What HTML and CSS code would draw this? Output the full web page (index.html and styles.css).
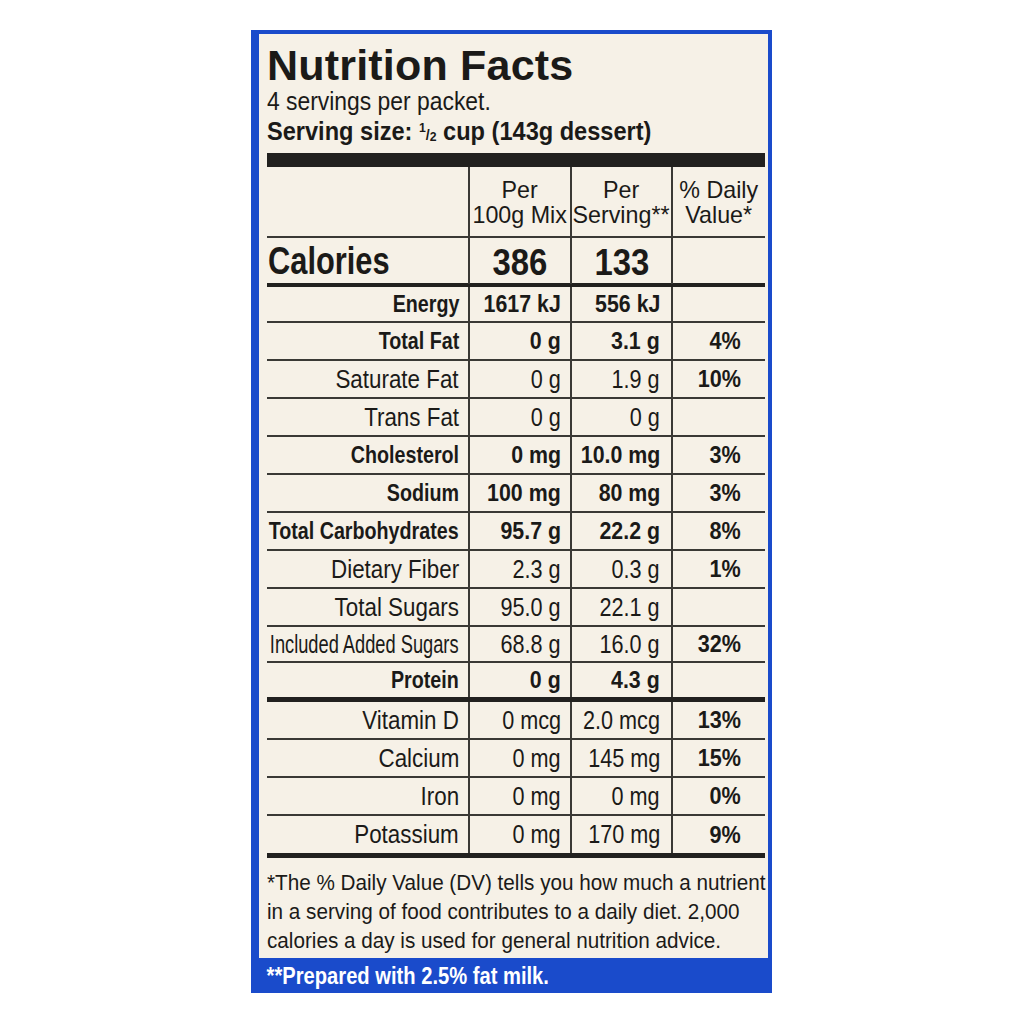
FILE: index.html
```html
<!DOCTYPE html>
<html lang="en">
<head>
<meta charset="utf-8">
<title>Nutrition Facts</title>
<link rel="stylesheet" href="styles.css">
</head>
<body>
<div class="label">
  <div class="card">
    <h1 class="title">Nutrition Facts</h1>
    <p class="servings">4 servings per packet.</p>
    <p class="size">Serving size: <span class="frac"><sup>1</sup>/<sub>2</sub></span> cup (143g dessert)</p>
    <div class="bar"></div>
    <div class="facts">
      <div class="row head">
        <div class="cell name"></div>
        <div class="cell hd"><span class="t">Per<br>100g Mix</span></div>
        <div class="cell hd"><span class="t">Per<br>Serving**</span></div>
        <div class="cell hd"><span class="t">% Daily<br>Value*</span></div>
      </div>
      <div class="row cal thick">
        <div class="cell name calname"><span class="t">Calories</span></div>
        <div class="cell calval"><span class="t">386</span></div>
        <div class="cell calval"><span class="t">133</span></div>
        <div class="cell"></div>
      </div>
      <div class="row short b">
        <div class="cell name"><span class="t">Energy</span></div>
        <div class="cell v2"><span class="t">1617 kJ</span></div>
        <div class="cell v3"><span class="t">556 kJ</span></div>
        <div class="cell dv"></div>
      </div>
      <div class="row b">
        <div class="cell name"><span class="t">Total Fat</span></div>
        <div class="cell v2"><span class="t">0 g</span></div>
        <div class="cell v3"><span class="t">3.1 g</span></div>
        <div class="cell dv"><span class="t">4%</span></div>
      </div>
      <div class="row r">
        <div class="cell name"><span class="t">Saturate Fat</span></div>
        <div class="cell v2"><span class="t">0 g</span></div>
        <div class="cell v3"><span class="t">1.9 g</span></div>
        <div class="cell dv"><span class="t">10%</span></div>
      </div>
      <div class="row r">
        <div class="cell name"><span class="t">Trans Fat</span></div>
        <div class="cell v2"><span class="t">0 g</span></div>
        <div class="cell v3"><span class="t">0 g</span></div>
        <div class="cell dv"></div>
      </div>
      <div class="row b">
        <div class="cell name"><span class="t">Cholesterol</span></div>
        <div class="cell v2"><span class="t">0 mg</span></div>
        <div class="cell v3"><span class="t">10.0 mg</span></div>
        <div class="cell dv"><span class="t">3%</span></div>
      </div>
      <div class="row b">
        <div class="cell name"><span class="t">Sodium</span></div>
        <div class="cell v2"><span class="t">100 mg</span></div>
        <div class="cell v3"><span class="t">80 mg</span></div>
        <div class="cell dv"><span class="t">3%</span></div>
      </div>
      <div class="row b">
        <div class="cell name"><span class="t">Total Carbohydrates</span></div>
        <div class="cell v2"><span class="t">95.7 g</span></div>
        <div class="cell v3"><span class="t">22.2 g</span></div>
        <div class="cell dv"><span class="t">8%</span></div>
      </div>
      <div class="row r">
        <div class="cell name"><span class="t">Dietary Fiber</span></div>
        <div class="cell v2"><span class="t">2.3 g</span></div>
        <div class="cell v3"><span class="t">0.3 g</span></div>
        <div class="cell dv"><span class="t">1%</span></div>
      </div>
      <div class="row r">
        <div class="cell name"><span class="t">Total Sugars</span></div>
        <div class="cell v2"><span class="t">95.0 g</span></div>
        <div class="cell v3"><span class="t">22.1 g</span></div>
        <div class="cell dv"></div>
      </div>
      <div class="row r short">
        <div class="cell name squeeze"><span class="t">Included Added Sugars</span></div>
        <div class="cell v2"><span class="t">68.8 g</span></div>
        <div class="cell v3"><span class="t">16.0 g</span></div>
        <div class="cell dv"><span class="t">32%</span></div>
      </div>
      <div class="row b prot">
        <div class="cell name"><span class="t">Protein</span></div>
        <div class="cell v2"><span class="t">0 g</span></div>
        <div class="cell v3"><span class="t">4.3 g</span></div>
        <div class="cell dv"></div>
      </div>
      <div class="row r">
        <div class="cell name"><span class="t">Vitamin D</span></div>
        <div class="cell v2"><span class="t">0 mcg</span></div>
        <div class="cell v3"><span class="t">2.0 mcg</span></div>
        <div class="cell dv"><span class="t">13%</span></div>
      </div>
      <div class="row r">
        <div class="cell name"><span class="t">Calcium</span></div>
        <div class="cell v2"><span class="t">0 mg</span></div>
        <div class="cell v3"><span class="t">145 mg</span></div>
        <div class="cell dv"><span class="t">15%</span></div>
      </div>
      <div class="row r">
        <div class="cell name"><span class="t">Iron</span></div>
        <div class="cell v2"><span class="t">0 mg</span></div>
        <div class="cell v3"><span class="t">0 mg</span></div>
        <div class="cell dv"><span class="t">0%</span></div>
      </div>
      <div class="row r last">
        <div class="cell name"><span class="t">Potassium</span></div>
        <div class="cell v2"><span class="t">0 mg</span></div>
        <div class="cell v3"><span class="t">170 mg</span></div>
        <div class="cell dv"><span class="t">9%</span></div>
      </div>
    </div>
    <p class="note"><span class="line">*The % Daily Value (DV) tells you how much a nutrient</span><span class="line">in a serving of food contributes to a daily diet. 2,000</span><span class="line">calories a day is used for general nutrition advice.</span></p>
  </div>
  <p class="prep">**Prepared with 2.5% fat milk.</p>
</div>
</body>
</html>
```

FILE: styles.css
```css
* { box-sizing: border-box; }

body {
  margin: 0;
  background: #ffffff;
  font-family: "Liberation Sans", Arial, sans-serif;
  color: #1b1a18;
}

.label {
  margin: 30px 0 0 251px;
  width: 521px;
  background: #1a4bcb;
  padding: 4px 4px 0 8px;
}

.card {
  background: #f6f1e7;
  padding: 9px 3px 0 8px;
  height: 924px;
  overflow: hidden;
}

.title {
  margin: 0;
  font-weight: 700;
  font-size: 43px;
  line-height: 44px;
  letter-spacing: 0.2px;
}

.servings {
  margin: 0;
  height: 29px;
  font-size: 25px;
  line-height: 29px;
  white-space: nowrap;
  transform: scaleX(0.915);
  transform-origin: left center;
}

.size {
  margin: 0;
  height: 31px;
  font-weight: 700;
  font-size: 25px;
  line-height: 31px;
  white-space: nowrap;
  transform: scaleX(0.943);
  transform-origin: left center;
}

.frac { font-size: 15px; }
.frac sup,
.frac sub {
  font-size: 13px;
  line-height: 0;
}
.frac sup { vertical-align: 8px; }
.frac sub { vertical-align: -1px; }

.bar {
  margin-top: 6px;
  height: 14px;
  background: #22211f;
}

.facts { width: 498px; }

.row {
  display: grid;
  grid-template-columns: 201px 102px 101px 94px;
  height: 38px;
  border-bottom: 2px solid #3a3935;
}

.row.head { height: 71px; }
.row.cal { height: 49px; border-bottom: 4px solid #22211f; }
.row.short { height: 36px; }
.row.prot { height: 39px; border-bottom: 5px solid #22211f; }
.row.last { height: 42px; border-bottom: 5px solid #22211f; }

.cell {
  display: flex;
  align-items: center;
  justify-content: flex-end;
  border-left: 2px solid #3a3935;
  white-space: nowrap;
  font-size: 24px;
}

.t {
  display: inline-block;
  flex: none;
  transform: scaleX(var(--sx, 1));
  transform-origin: right center;
}

.cell.name {
  border-left: 0;
  padding-right: 9px;
}

.cell.v2 { padding-right: 9px; }
.cell.v3 { padding-right: 11px; }
.cell.dv {
  padding-right: 24px;
  font-weight: 700;
  --sx: 0.9;
}

.row.b .cell { font-weight: 700; }
.row.b .cell.name { --sx: 0.82; }
.row.b .cell.v2,
.row.b .cell.v3 { --sx: 0.89; }

.row.r .cell.v2,
.row.r .cell.v3,
.row.r .cell.name { font-size: 25px; }
.row.r .cell.name { --sx: 0.895; }
.row.r .cell.v2,
.row.r .cell.v3 { --sx: 0.865; }
.row.r .cell.name.squeeze { --sx: 0.73; }

.cell.hd {
  justify-content: center;
  text-align: center;
  line-height: 25px;
  padding-top: 1px;
  font-size: 24px;
  --sx: 0.97;
}
.cell.hd .t { transform-origin: center center; }

.cell.calname {
  justify-content: flex-start;
  padding-left: 1px;
  font-weight: 700;
  font-size: 39px;
  --sx: 0.79;
}
.cell.calname .t { transform-origin: left center; }

.cell.calval {
  justify-content: center;
  font-weight: 700;
  font-size: 37px;
  padding-top: 4px;
  --sx: 0.89;
}
.cell.calval .t { transform-origin: center center; }

.note {
  margin: 0;
  padding-top: 10px;
  font-size: 22px;
  line-height: 29px;
  transform: scaleX(0.94);
  transform-origin: left top;
}

.note .line {
  display: block;
  white-space: nowrap;
}

.prep {
  margin: 0;
  height: 35px;
  display: flex;
  align-items: center;
  color: #ffffff;
  font-weight: 700;
  font-size: 24px;
  padding-left: 9px;
  white-space: nowrap;
  transform: scaleX(0.84);
  transform-origin: left center;
}
```
